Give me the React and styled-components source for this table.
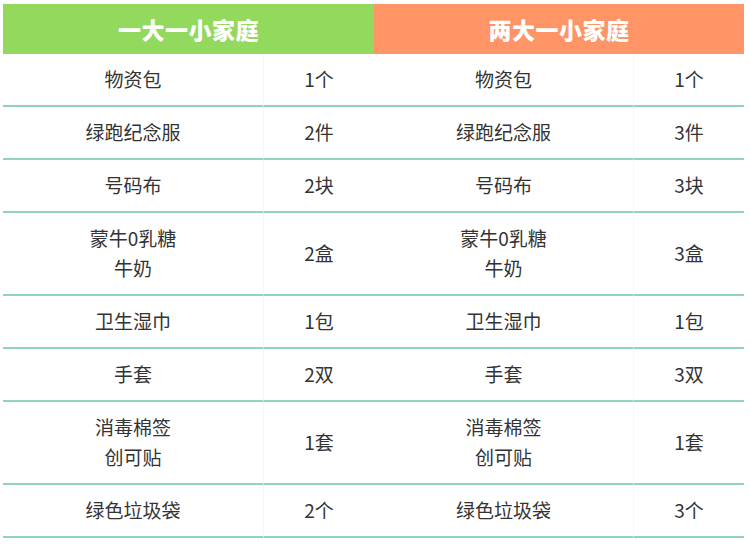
import React from 'react';
import styled, { createGlobalStyle } from 'styled-components';

const rows = [
    { item: ['物资包'], a: '1个', b: '1个' },
    { item: ['绿跑纪念服'], a: '2件', b: '3件' },
    { item: ['号码布'], a: '2块', b: '3块' },
    { item: ['蒙牛0乳糖', '牛奶'], a: '2盒', b: '3盒' },
    { item: ['卫生湿巾'], a: '1包', b: '1包' },
    { item: ['手套'], a: '2双', b: '3双' },
    { item: ['消毒棉签', '创可贴'], a: '1套', b: '1套' },
    { item: ['绿色垃圾袋'], a: '2个', b: '3个' },
];

const GlobalStyle = createGlobalStyle`
    html, body {
        margin: 0;
        padding: 0;
        background: #fff;
    }
    body {
        font-family: "Noto Sans CJK SC", "Noto Sans", sans-serif;
        color: #333;
    }
`;

const Table = styled.div`
    width: 741px;
    margin: 4px 0 0 3px;
    display: grid;
    grid-template-columns: 260px 111px 259px 111px;
`;

const Head = styled.div`
    grid-column: span 2;
    height: 50px;
    display: flex;
    align-items: center;
    justify-content: center;
    background: ${(p) => p.$bg};
    color: #fff;
    font-size: 23px;
    font-weight: 900;
    letter-spacing: 0.5px;
`;

const Cell = styled.div`
    box-sizing: border-box;
    height: ${(p) => (p.$tall ? 83 : 53)}px;
    padding-bottom: 1px;
    border-bottom: 2px solid #93d2c2;
    border-left: ${(p) => (p.$qty ? '1px solid #f6f8f7' : 'none')};
    display: flex;
    flex-direction: column;
    align-items: center;
    justify-content: center;
    font-size: 19px;
    line-height: 30px;
    color: #333;
`;

const App = () => (
    <>
        <GlobalStyle />
        <Table>
            <Head $bg="#92d95e">一大一小家庭</Head>
            <Head $bg="#ff9467">两大一小家庭</Head>
            {rows.map((r, i) => {
                const tall = r.item.length > 1;
                return (
                    <React.Fragment key={i}>
                        <Cell $tall={tall}>
                            {r.item.map((t) => (
                                <span key={t}>{t}</span>
                            ))}
                        </Cell>
                        <Cell $tall={tall} $qty>{r.a}</Cell>
                        <Cell $tall={tall}>
                            {r.item.map((t) => (
                                <span key={t}>{t}</span>
                            ))}
                        </Cell>
                        <Cell $tall={tall} $qty>{r.b}</Cell>
                    </React.Fragment>
                );
            })}
        </Table>
    </>
);

export default App;
